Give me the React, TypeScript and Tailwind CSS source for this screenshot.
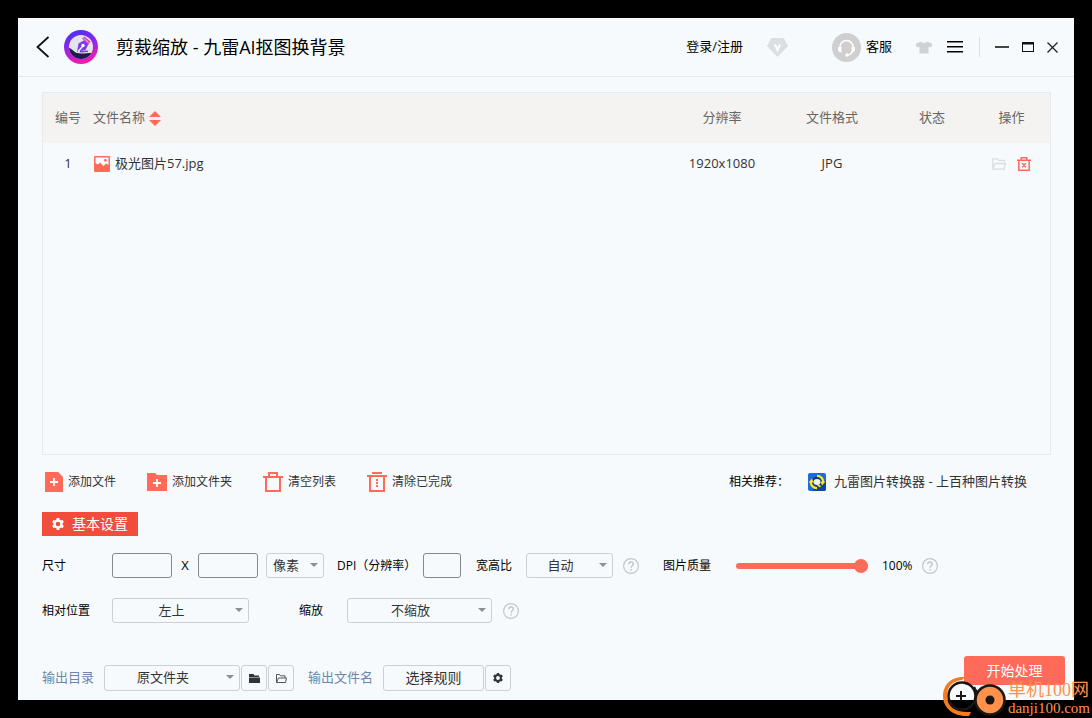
import React, { useState } from 'react';

interface FileItem {
  id: number;
  name: string;
  resolution: string;
  format: string;
  status: string;
}

const files: FileItem[] = [
  { id: 1, name: '极光图片57.jpg', resolution: '1920x1080', format: 'JPG', status: '' },
];

function GearIcon({ className }: { className: string }) {
  return (
    <svg viewBox="0 0 12 12" className={className} fill="none" stroke="currentColor">
      <circle cx="6" cy="6" r="3.5" strokeWidth="2.4" />
      <path d="M6 0v2M6 10v2M.8 3l1.800 1M9.400 8l1.800 1M.8 9l1.800-1M9.400 4l1.800-1" strokeWidth="2.800" />
    </svg>
  );
}

function HelpIcon({ label }: { label: string }) {
  return (
    <button aria-label={label} className="shrink-0 text-[#c4c6c8]">
      <svg width="16" height="16" viewBox="0 0 16 16" fill="none" stroke="currentColor">
        <circle cx="8" cy="8" r="7.4" strokeWidth="1.2" />
        <path d="M5.700 6.300c0-1.500 1-2.300 2.300-2.300s2.300.8 2.300 2.100c0 1.700-2.200 1.700-2.200 3.700M8.100 11v1.400" strokeWidth="1.500" />
      </svg>
    </button>
  );
}

function AppLogo() {
  return (
    <svg width="34" height="34" viewBox="0 0 34 34">
      <defs>
        <linearGradient id="ring" x1="0.3" y1="0" x2="0.6" y2="1">
          <stop offset="0" stopColor="#4530ff" />
          <stop offset="0.5" stopColor="#9a25e6" />
          <stop offset="1" stopColor="#ff18a8" />
        </linearGradient>
        <clipPath id="inner">
          <circle cx="17" cy="17" r="12" />
        </clipPath>
      </defs>
      <circle cx="17" cy="17" r="17" fill="url(#ring)" />
      <g clipPath="url(#inner)">
        <path d="M0 0h34v34H0z" fill="#e4e4e8" />
        <path d="M4 18c4 0 5 4 9 5s9 0 17 0v9H4z" fill="#221850" />
        <path d="M13 22l1.500-8.500 6-3.500 4 4-3 6-5 1z" fill="#7a3cf0" />
        <path d="M18 8.500l2.500-2 6 5-2 3z" fill="#d743b4" />
        <path d="M19.500 8l5 4.500" stroke="#f3d5ef" strokeWidth=".8" />
        <path d="M14 21.500l4.500-5" stroke="#fff" strokeWidth="1.200" />
        <circle cx="19" cy="15.500" r="1.700" fill="#fff" />
        <path d="M16 21.500c3 1 5-1 8 0" stroke="#7a3cf0" strokeWidth="1.500" fill="none" />
      </g>
    </svg>
  );
}

function Select({ id, label, options, className }: { id: string; label: string; options: string[]; className: string }) {
  return (
    <div className={`relative shrink-0 ${className}`}>
      <select
        id={id}
        aria-label={label}
        className="block h-full w-full appearance-none rounded-[3px] border border-[#cdd0d2] bg-transparent pb-0.5 pr-[18px] text-center text-[13px] leading-5 text-[#333]"
      >
        {options.map((o) => (
          <option key={o}>{o}</option>
        ))}
      </select>
      <svg className="pointer-events-none absolute right-1.5 top-2.5" width="8" height="4" viewBox="0 0 8 4">
        <path d="M0 0h8L4 4z" fill="#8d9092" />
      </svg>
    </div>
  );
}

function Header() {
  return (
    <header className="flex h-[59px] shrink-0 items-center border-b border-[#e5e7e9] pl-[18px] pr-4 text-black">
      <button aria-label="返回">
        <svg width="14" height="22" viewBox="0 0 14 22" fill="none" stroke="#111" strokeWidth="1.800">
          <path d="M12.500 1L1.500 11l11 10" />
        </svg>
      </button>
      <div className="ml-3.5 mr-[18px]">
        <AppLogo />
      </div>
      <h1 className="flex-1 text-lg">剪裁缩放 - 九雷AI抠图换背景</h1>

      <button className="text-[13px]">登录/注册</button>
      <button aria-label="会员" className="ml-6">
        <svg width="21" height="19" viewBox="0 0 21 19">
          <path d="M4.500.5h12L20.500 8l-10 10.500L.5 8z" fill="#dcdedf" stroke="#dcdedf" strokeLinejoin="round" />
          <path d="M8 6.500l2.500 5.500L13 6.500" fill="none" stroke="#fff" strokeWidth="2" />
        </svg>
      </button>
      <button className="ml-11 flex items-center gap-[5px] text-[13px]">
        <svg width="29" height="29" viewBox="0 0 29 29">
          <circle cx="14.500" cy="14.500" r="14.500" fill="#cfcfcf" />
          <path d="M8 16v-2a6.500 6.500 0 0 1 13 0v2c0 3-1.500 5-5 6" fill="none" stroke="#fff" strokeWidth="1.500" />
          <path d="M6 14h3.500v5.500C7.500 19.500 6 18.500 6 17zM23 14h-3.500v5.500c2 0 3.500-1 3.500-2.500z" fill="#fff" />
          <circle cx="15" cy="22" r="1.700" fill="#fff" />
        </svg>
        客服
      </button>
      <button aria-label="皮肤" className="ml-[23px]">
        <svg width="18" height="13" viewBox="0 0 18 13">
          <path d="M5.500.5c1 1.800 6 1.800 7 0L17.500 3 16 6.500l-2.500-.7v6.700h-9V5.800L2 6.500.5 3z" fill="#cfd1d2" />
        </svg>
      </button>
      <button aria-label="菜单" className="ml-3.5">
        <svg width="16" height="12" viewBox="0 0 16 12" fill="#000">
          <path d="M0 0h16v1.500H0zM0 5h16v1.500H0zM0 10h16v1.500H0z" />
        </svg>
      </button>
      <div className="ml-4 mr-[15px] h-5 w-px bg-[#dcdedf]" />
      <div className="flex items-center gap-[13px]">
        <button aria-label="最小化">
          <svg width="14" height="12" viewBox="0 0 14 12">
            <path d="M0 6h14" stroke="#444" strokeWidth="2" />
          </svg>
        </button>
        <button aria-label="最大化">
          <svg width="12" height="10" viewBox="0 0 12 10">
            <path d="M0 0h12v10H0zM1 2.500V9h10V2.500z" fill="#111" fillRule="evenodd" />
          </svg>
        </button>
        <button aria-label="关闭">
          <svg width="11" height="11" viewBox="0 0 11 11">
            <path d="M.5.5l10 10m0-10l-10 10" stroke="#222" strokeWidth="1.300" />
          </svg>
        </button>
      </div>
    </header>
  );
}

function FileTable() {
  return (
    <div className="min-h-[200px] flex-1 border border-[#e7e9eb]">
      <table className="w-full table-fixed text-[13px]">
        <colgroup>
          <col className="w-[50px]" />
          <col />
          <col className="w-[110px]" />
          <col className="w-[110px]" />
          <col className="w-[90px]" />
          <col className="w-[73px]" />
        </colgroup>
        <thead>
          <tr className="h-[50px] bg-[#f5f3f1] text-[#666]">
            <th className="font-normal">编号</th>
            <th className="text-left font-normal">
              <button className="flex items-center gap-1">
                文件名称
                <svg width="12" height="15" viewBox="0 0 12 15" fill="#ff6a59">
                  <path d="M0 6l6-6 6 6zM0 9h12l-6 6z" />
                </svg>
              </button>
            </th>
            <th className="font-normal">分辨率</th>
            <th className="font-normal">文件格式</th>
            <th className="font-normal">状态</th>
            <th className="pr-1 font-normal">操作</th>
          </tr>
        </thead>
        <tbody>
          {files.map((f) => (
            <tr key={f.id} className="h-[42px] text-center text-[#333]">
              <td>{f.id}</td>
              <td>
                <div className="flex items-center gap-[5px] pl-px">
                  <svg width="16" height="16" viewBox="0 0 16 16">
                    <rect width="16" height="16" rx="1" fill="#ff6a59" />
                    <path d="M1.500 1.500h13V9l-2.500-1.500L9.500 10 6 6.500 4 8.500 1.500 7z" fill="#fff" />
                    <circle cx="11.300" cy="4.300" r="1.400" fill="#ff6a59" />
                  </svg>
                  {f.name}
                </div>
              </td>
              <td>{f.resolution}</td>
              <td>{f.format}</td>
              <td>{f.status}</td>
              <td className="pr-1">
                <div className="flex items-center justify-center gap-[11px]">
                  <button aria-label="打开文件夹">
                    <svg width="14" height="12" viewBox="0 0 14 12" fill="none" stroke="#dadcdd" strokeWidth="1.300">
                      <path d="M12.300 3.800V2.300H6.500L5 .8H.8v10.400h11.400l1.100-5.700H3.500L.8 10" />
                    </svg>
                  </button>
                  <button aria-label="删除">
                    <svg width="14" height="14" viewBox="0 0 14 14" fill="none" stroke="#ff6a59" strokeWidth="1.500">
                      <path d="M0 3.200h14M4.200 3V.8h5.600V3M1.800 3.500v9.700h10.400V3.500M5.200 6.200l3.600 4m0-4l-3.600 4" />
                    </svg>
                  </button>
                </div>
              </td>
            </tr>
          ))}
        </tbody>
      </table>
    </div>
  );
}

const toolBtn = 'flex items-center gap-[5px] whitespace-nowrap';

function Toolbar() {
  return (
    <div className="mt-[17px] flex h-5 items-center justify-between pl-px pr-6 text-xs text-[#333]">
      <div className="flex gap-[31px]">
        <button className={toolBtn}>
          <svg width="20" height="20" viewBox="0 0 20 20">
            <path d="M2 0h13l5 5v15H2z" fill="#ff6a59" />
            <path d="M11 6v8M7 10h8" stroke="#fff" strokeWidth="1.800" />
          </svg>
          添加文件
        </button>
        <button className={toolBtn}>
          <svg width="20" height="20" viewBox="0 0 20 20">
            <path d="M0 1h8l2 2h10v16H0z" fill="#ff6a59" />
            <path d="M10 7v8M6 11h8" stroke="#fff" strokeWidth="1.800" />
          </svg>
          添加文件夹
        </button>
        <button className={toolBtn}>
          <svg width="20" height="20" viewBox="0 0 20 20" fill="none" stroke="#ff6a59" strokeWidth="2">
            <path d="M0 5h20M6 5V1h8v4M3 5v14h14V5" />
          </svg>
          清空列表
        </button>
        <button className={toolBtn}>
          <svg width="20" height="20" viewBox="0 0 20 20" fill="none" stroke="#ff6a59" strokeWidth="2">
            <path d="M0 4h20M5 1h10M3 4v15h14V4M10 7v2M10 10v2M10 13v2" />
          </svg>
          清除已完成
        </button>
      </div>
      <div className="flex items-center text-black">
        相关推荐：
        <a href="#converter" className="ml-[19px] flex items-center gap-2 text-[13px] text-[#333]">
          <svg width="18" height="18" viewBox="0 0 18 18">
            <rect width="18" height="18" rx="2" fill="#1b6be0" />
            <path d="M18 7v9a2 2 0 0 1-2 2H4z" fill="#0c46a0" />
            <circle cx="9" cy="9" r="5.500" fill="#123a78" />
            <path d="M9 2.800A6.200 6.200 0 0 1 15.200 9M9 15.200A6.200 6.200 0 0 1 2.800 9" fill="none" stroke="#ffe81a" strokeWidth="2.200" />
            <path d="M12.500 8.500h5L14 12.500zM5.500 9.500h-5L4 5.500z" fill="#ffe81a" />
            <ellipse cx="9" cy="9" rx="3.500" ry="3" fill="#f2f2ee" />
            <path d="M10 11l3 2-1 1.500-3-2z" fill="#ffe81a" />
          </svg>
          九雷图片转换器 - 上百种图片转换
        </a>
      </div>
    </div>
  );
}

const numInput = 'h-[25px] shrink-0 rounded-[3px] border border-[#85898c] bg-transparent px-1 text-[13px]';

function Settings() {
  const [quality, setQuality] = useState(100);

  return (
    <section className="text-xs text-black">
      <h2 className="mt-5 flex h-6 w-24 items-center gap-2 bg-[#f24c3a] pl-2.5 text-sm text-white">
        <GearIcon className="size-3" />
        基本设置
      </h2>

      <div className="mt-[17px] flex h-[25px] items-center whitespace-nowrap">
        <label htmlFor="width" className="w-[70px]">尺寸</label>
        <input id="width" className={`${numInput} w-[60px]`} />
        <label htmlFor="height" className="w-[26px] text-center text-[13px]">X</label>
        <input id="height" className={`${numInput} w-[60px]`} />
        <Select id="unit" label="单位" options={['像素', '厘米']} className="ml-2 h-[25px] w-[58px]" />
        <label htmlFor="dpi" className="ml-[13px] w-[86px]">DPI（分辨率）</label>
        <input id="dpi" className={`${numInput} w-[38px]`} />
        <label htmlFor="ratio" className="ml-[15px] w-[50px]">宽高比</label>
        <Select id="ratio" label="宽高比" options={['自动', '16:9', '4:3', '1:1']} className="mr-2.5 h-[25px] w-[87px]" />
        <HelpIcon label="宽高比说明" />
        <label htmlFor="quality" className="ml-6 w-[73px]">图片质量</label>
        <input
          id="quality"
          type="range"
          value={quality}
          onChange={(e) => setQuality(Number(e.target.value))}
          className="h-3.5 w-[132px] appearance-none bg-transparent [&::-webkit-slider-runnable-track]:h-1.5 [&::-webkit-slider-runnable-track]:rounded-full [&::-webkit-slider-runnable-track]:bg-[#ff6a59] [&::-webkit-slider-thumb]:-mt-1 [&::-webkit-slider-thumb]:size-3.5 [&::-webkit-slider-thumb]:appearance-none [&::-webkit-slider-thumb]:rounded-full [&::-webkit-slider-thumb]:bg-[#ff6a59]"
        />
        <output htmlFor="quality" className="ml-3.5 w-10">{quality}%</output>
        <HelpIcon label="图片质量说明" />
      </div>

      <div className="mt-5 flex h-[25px] items-center whitespace-nowrap">
        <label htmlFor="position" className="w-[70px]">相对位置</label>
        <Select id="position" label="相对位置" options={['左上', '居中', '右下']} className="h-[25px] w-[137px]" />
        <label htmlFor="scale" className="ml-[50px] w-12">缩放</label>
        <Select id="scale" label="缩放" options={['不缩放', '等比缩放']} className="mr-[11px] h-[25px] w-[145px]" />
        <HelpIcon label="缩放说明" />
      </div>
    </section>
  );
}

const boxBtn = 'flex h-[26px] shrink-0 items-center justify-center rounded-[3px] border border-[#cdd0d2] text-[#333]';

function Footer() {
  return (
    <footer className="mt-[33px] flex items-end justify-between pb-[9px] pl-6 pr-[9px]">
      <div className="flex items-center whitespace-nowrap text-[13px] text-[#6b87ab]">
        <label htmlFor="outdir" className="w-[62px]">输出目录</label>
        <Select id="outdir" label="输出目录" options={['原文件夹', '自定义']} className="h-[26px] w-[136px]" />
        <button aria-label="选择目录" className={`${boxBtn} ml-px w-[26px]`}>
          <svg width="11" height="9" viewBox="0 0 11 9" fill="currentColor">
            <path d="M0 0h4.500l1 1.500H10V3H0zM0 3.500h11V9H0z" />
          </svg>
        </button>
        <button aria-label="打开目录" className={`${boxBtn} ml-px w-[26px]`}>
          <svg width="11" height="9" viewBox="0 0 11 9" fill="none" stroke="#555">
            <path d="M.5 8.500v-8h3l1 1.300H9V4M.5 8.500L2.500 4h8L9.500 8.500z" />
          </svg>
        </button>
        <span className="ml-3.5 w-[75px]">输出文件名</span>
        <button className={`${boxBtn} w-[101px] text-sm`}>选择规则</button>
        <button aria-label="命名设置" className={`${boxBtn} ml-px w-[26px]`}>
          <GearIcon className="size-2.5" />
        </button>
      </div>
      <button className="mb-1.5 h-[29px] w-[101px] rounded-[3px] bg-[#ff6a59] text-sm text-white">开始处理</button>
    </footer>
  );
}

function SiteMark() {
  return (
    <div className="pointer-events-none absolute bottom-0 right-0.5 flex items-end gap-0.5 text-[#ff914d]">
      <svg width="64" height="42" viewBox="0 0 64 42" fill="none">
        <path d="M23 1C8 0 1 10 1 20s8 21 26 20l2-4C14 37 5 31 5 20S12 5 20 4z" fill="#f47b20" />
        <circle cx="20" cy="20" r="13.500" stroke="#1a1614" strokeWidth="2.500" />
        <path d="M19 15v10M14 20h10" stroke="#1a1614" strokeWidth="2" />
        <path d="M32 11c1 3 2 5 5 6M40 12l-3 5" stroke="#1a1614" strokeWidth="2.500" />
        <circle cx="48" cy="24" r="14.500" fill="#ff914d" stroke="#1a1614" strokeWidth="2.500" />
        <circle cx="48" cy="24" r="4.500" fill="#1a1614" />
      </svg>
      <div className="pb-0.5 font-['Liberation_Serif','Noto_Sans_CJK_SC',serif]">
        <div className="text-lg leading-5">单机100网</div>
        <div className="text-[15px] leading-4">danji100.com</div>
      </div>
    </div>
  );
}

export default function App() {
  return (
    <div className="relative flex min-h-screen flex-col bg-black p-[18px] font-['Open_Sans','Noto_Sans_CJK_SC',sans-serif]">
      <div className="flex flex-1 flex-col bg-[#f7fafc]">
        <Header />
        <main className="flex flex-1 flex-col pl-6 pr-[23px] pt-[15px]">
          <FileTable />
          <Toolbar />
          <Settings />
        </main>
        <Footer />
      </div>
      <SiteMark />
    </div>
  );
}
